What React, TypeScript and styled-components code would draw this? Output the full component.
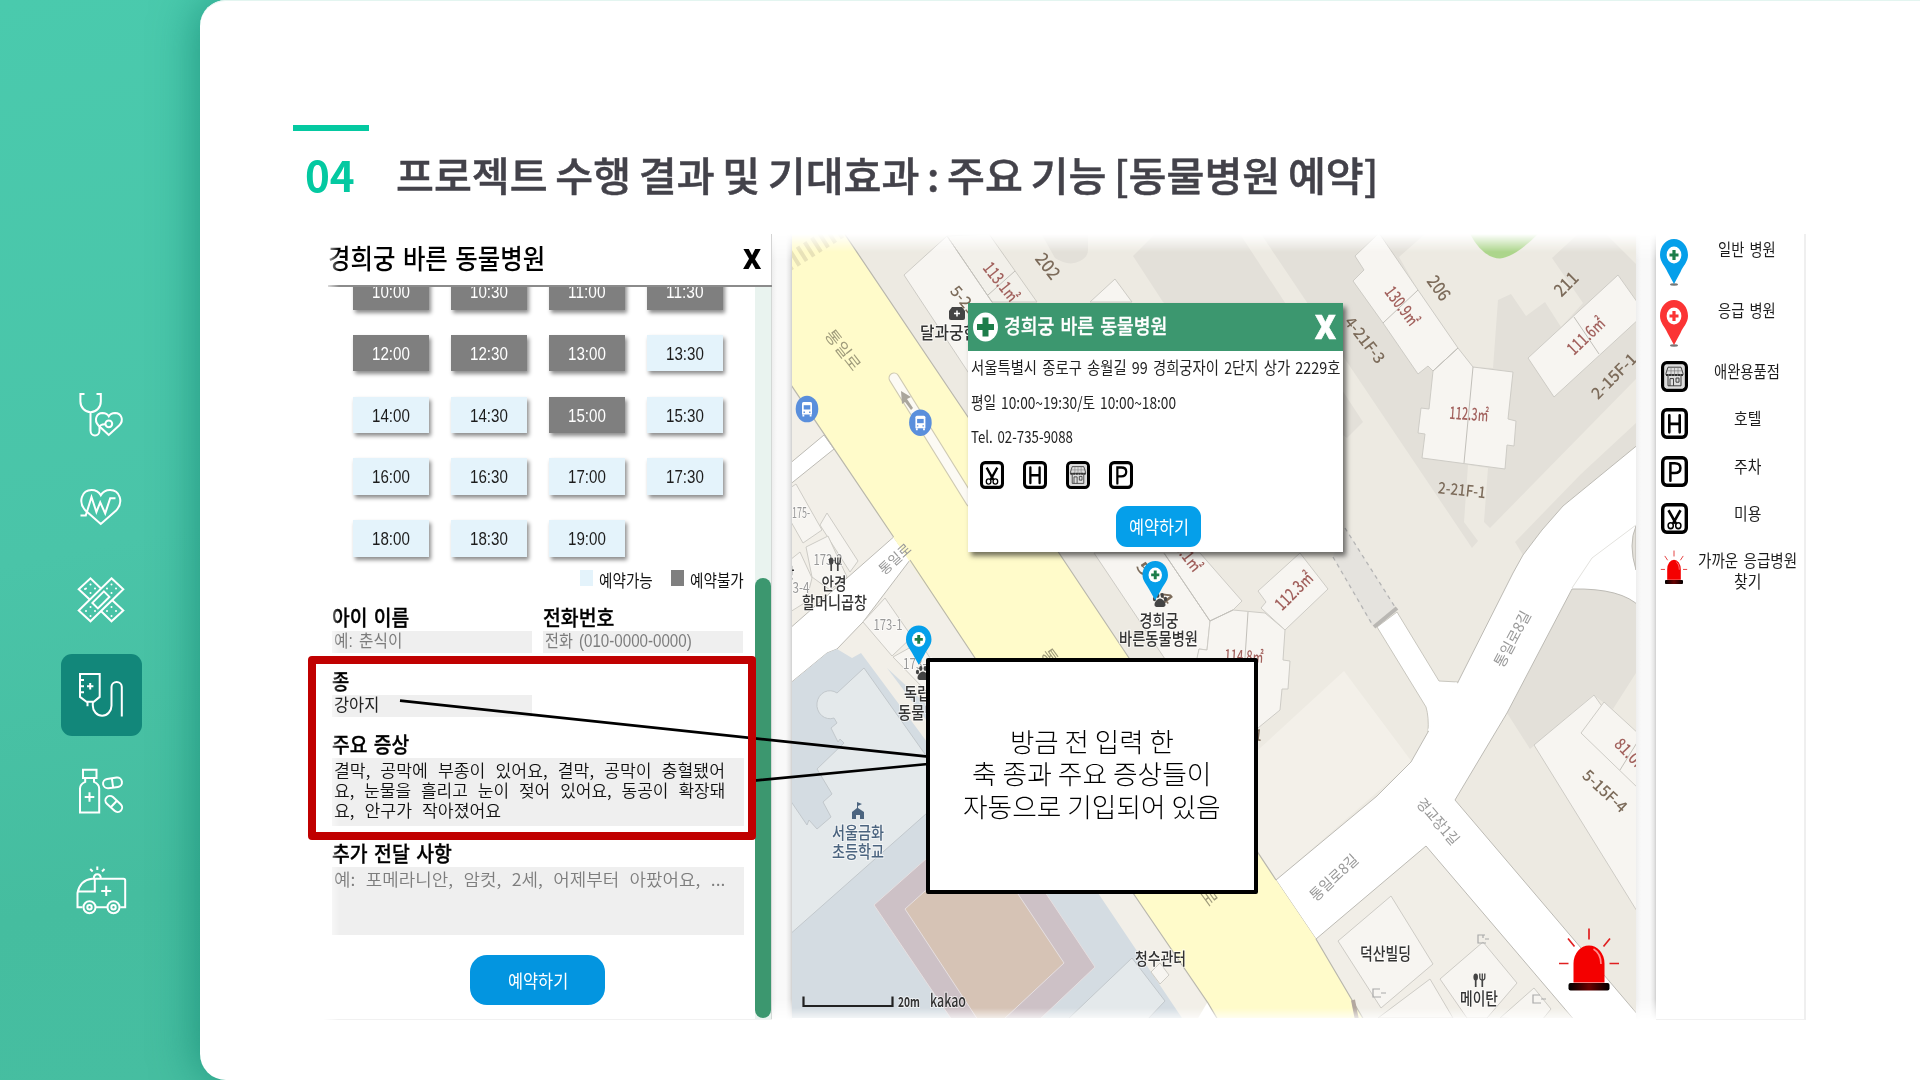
import React, { useLayoutEffect, useRef, useState } from "react";
import styled, { createGlobalStyle, css } from "styled-components";

const sans = `"Noto Sans CJK KR", "Noto Sans", sans-serif`;
const arial = `"Liberation Sans", "Noto Sans CJK KR", sans-serif`;
const green = "#3c976f";

const Global = createGlobalStyle`
  * { box-sizing: border-box; }
  body { margin: 0; background: #47bfa3; font-family: ${sans}; color: #111; }
`;

/* ---------- text squeezed to a known width ---------- */

const FitBox = styled.span`
  display: inline-block;
  flex: none;
  white-space: pre;
  text-align: left;
`;
const FitInner = styled.span`
  display: inline-block;
  transform-origin: 0 50%;
`;

function Fit({ w, children }: { w: number; children: string }) {
  const ref = useRef<HTMLSpanElement>(null);
  const [scale, setScale] = useState(1);
  useLayoutEffect(() => {
    if (ref.current) setScale(w / ref.current.offsetWidth);
  }, [w, children]);
  return (
    <FitBox style={{ width: w }}>
      <FitInner ref={ref} style={{ transform: `scaleX(${scale})` }}>
        {children}
      </FitInner>
    </FitBox>
  );
}

/* ---------- shell ---------- */

const Page = styled.div`
  width: 1920px;
  height: 1080px;
  display: flex;
  overflow: hidden;
  background: linear-gradient(168deg, #4acaad 0%, #4ac4a8 38%, #45bd9f 62%, #48c0a4 100%);
`;
const Sidebar = styled.nav`
  width: 200px;
  flex: none;
  display: flex;
  flex-direction: column;
  align-items: center;
  padding: 373px 0 0 3px;
`;
const NavItem = styled.a<{ $active?: boolean; $gap?: number }>`
  width: 81px;
  height: 82px;
  margin-bottom: ${(p) => p.$gap ?? 11}px;
  border-radius: 11px;
  display: flex;
  align-items: center;
  justify-content: center;
  background: ${(p) => (p.$active ? "#12877a" : "transparent")};
`;
const NavSvg = styled.svg`
  width: 48px;
  height: 48px;
  margin-right: 1.5px;
  overflow: visible;
  fill: none;
  stroke: #fff;
  stroke-width: 2;
`;
const Sheet = styled.main`
  position: relative;
  flex: 1;
  background: #fff;
  border-radius: 26px 0 0 26px;
  box-shadow: -4px 0 44px rgba(10, 125, 105, 0.6), inset 0 1px #e3f5f0;
  padding: 125px 0 0 93px;
`;
const Accent = styled.div`
  width: 76px;
  height: 6px;
  background: #04c9a1;
`;
const Heading = styled.header`
  display: flex;
  align-items: center;
  height: 62px;
  margin-top: 12px;
  padding-left: 12px;
  line-height: 62px;
`;
const Num = styled.div`
  width: 91px;
  height: 64px;
  color: #04c9a1;
  font: 700 43px/62px ${sans};
`;
const Title = styled.h1`
  margin: 0;
  color: #43424a;
  font: 500 40px/62px ${sans};
  word-spacing: -0.04em;
  -webkit-text-stroke: 0.5px #43424a;
`;
const Shot = styled.section`
  display: flex;
  height: 786px;
  margin: 29px 0 0 30px;
  word-spacing: 0.14em;
`;

/* ---------- booking ---------- */

const Booking = styled.section`
  width: 449px;
  height: 786px;
  display: flex;
  flex-direction: column;
  padding-left: 5px;
  border-bottom: 1px solid #f1f1f1;
  mask-image: linear-gradient(90deg, transparent 0, #000 16px);
`;
const BookingHead = styled.div`
  height: 53px;
  flex: none;
  display: flex;
  align-items: center;
  justify-content: space-between;
  padding: 0 11px 0 0;
  font-size: 27px;
  line-height: 49px;
  font-weight: 500;
  color: #000;
  border-bottom: 2px solid #8b8b8b;
  box-shadow: inset -1px 0 #d4d4d4;
`;
const HeadTitle = styled.div`
  height: 53px;
`;
const Close = styled.b<{ $light?: boolean }>`
  height: ${(p) => (p.$light ? 40 : 43)}px;
  font: 800 ${(p) => (p.$light ? 33 : 28)}px/40px "Open Sans", sans-serif;
  color: ${(p) => (p.$light ? "#fff" : "#000")};
  -webkit-text-stroke: ${(p) => (p.$light ? 0.6 : 0)}px currentColor;
`;
const BookingScroll = styled.div`
  flex: 1;
  display: flex;
  overflow: hidden;
`;
const BookingBody = styled.div`
  flex: 1;
  overflow: hidden;
  padding: 0 11px 0 4px;
`;
const Track = styled.div`
  width: 17px;
  background: #e9f3ef;
  border-right: 1px solid #d4d8d6;
  padding-top: 291px;
`;
const Thumb = styled.div`
  height: 440px;
  border-radius: 8px;
  background: ${green};
`;
const Slots = styled.div`
  display: grid;
  grid-template-columns: repeat(4, 76px);
  column-gap: 22px;
  row-gap: 25.3px;
  padding-left: 21px;
  margin-top: -14px;
`;
const Slot = styled.div<{ $taken: boolean }>`
  height: 36.5px;
  display: flex;
  justify-content: center;
  font: 17.5px/38px ${arial};
  box-shadow: 2px 3px 4px rgba(0, 0, 0, 0.45);
  background: ${(p) => (p.$taken ? "#7f7f7f" : "#e4f3fb")};
  color: ${(p) => (p.$taken ? "#fff" : "#1c1c1c")};
`;
const Key = styled.div`
  display: flex;
  justify-content: flex-end;
  align-items: center;
  height: 26px;
  margin: 10px 0 8px;
  font-size: 16.5px;
  line-height: 26px;
`;
const Swatch = styled.i<{ $taken?: boolean }>`
  width: 13px;
  height: 16px;
  margin: 0 6px 3px 18px;
  background: ${(p) => (p.$taken ? "#7f7f7f" : "#e4f3fb")};
`;
const Fields = styled.div`
  display: grid;
  grid-template-columns: 200px 200px;
  column-gap: 11px;
`;
const Field = styled.div<{ $h: number }>`
  height: ${(p) => p.$h}px;
`;
const Label = styled.div`
  height: 30px;
  font-size: 21px;
  line-height: 30px;
  font-weight: 500;
  color: #000;
  -webkit-text-stroke: 0.3px #000;
`;
const inputBase = css`
  background: #efefef;
  padding-left: 2px;
`;
const Input = styled.div<{ $hint?: boolean }>`
  ${inputBase}
  height: 22px;
  font: 17.5px/21px ${arial};
  color: ${(p) => (p.$hint ? "#7d7d7d" : "#222")};
`;
const Area = styled.div<{ $hint?: boolean }>`
  ${inputBase}
  height: 68px;
  padding-top: 2px;
  display: flex;
  flex-direction: column;
  font-size: 17px;
  line-height: 20px;
  font-weight: 350;
  word-spacing: 0.36em;
  color: ${(p) => (p.$hint ? "#7d7d7d" : "#111")};
`;
const Submit = styled.div`
  width: 135px;
  height: 50px;
  margin: 0 0 0 138px;
  border-radius: 17px;
  background: #0395e0;
  color: #fff;
  display: flex;
  justify-content: center;
  font-size: 18px;
  line-height: 50px;
`;

/* ---------- map ---------- */

const Gutter = styled.div`
  width: 20px;
  background: linear-gradient(90deg, #eee 0, #f9f9f9 5px, #f9f9f9 14px, #e6e6e6 18px, #cfcfcf 20px);
  mask-image: linear-gradient(transparent 0, #000 26px, #000 765px, transparent);
`;
const MapBox = styled.section`
  position: relative;
  width: 844px;
  height: 784px;
`;
const MapFade = styled.div`
  height: 784px;
  word-spacing: 0;
  mask-image: linear-gradient(transparent 0, #000 18px, #000 774px, rgba(0, 0, 0, 0.3));
`;
const Popup = styled.div`
  position: absolute;
  left: 176px;
  top: 69px;
  width: 375px;
  height: 249px;
  background: #fff;
  box-shadow: 3px 4px 5px rgba(0, 0, 0, 0.55);
`;
const PopupHead = styled.div`
  height: 48px;
  background: ${green};
  color: #fff;
  display: flex;
  align-items: center;
  padding: 0 7px 0 5px;
  font-size: 20.5px;
  line-height: 44px;
  font-weight: 500;
  -webkit-text-stroke: 0.3px #fff;
`;
const PopupTitle = styled.div`
  flex: 1;
  height: 48px;
  padding-left: 6px;
`;
const PopupLine = styled.div`
  height: 34.7px;
  padding-left: 3px;
  font-size: 16.5px;
  line-height: 32px;
  color: #222;
`;
const Services = styled.div`
  display: flex;
  gap: 19px;
  padding: 6px 0 0 12px;
`;
const Reserve = styled.div`
  width: 85px;
  height: 41px;
  margin: 17px 0 0 148px;
  border-radius: 11px;
  background: #059fea;
  color: #fff;
  display: flex;
  justify-content: center;
  font-size: 18.5px;
  line-height: 40px;
`;

/* ---------- legend ---------- */

const Legend = styled.aside`
  width: 150px;
  height: 786px;
  padding-top: 5px;
  border-right: 2px solid #efefef;
  border-bottom: 1px solid #f1f1f1;
`;
const LegendRow = styled.div<{ $h: number }>`
  height: ${(p) => p.$h}px;
  display: grid;
  grid-template-columns: 36px 1fr;
  justify-items: center;
`;
const LegendText = styled.div`
  display: flex;
  flex-direction: column;
  align-items: center;
  padding-right: 2px;
  font-size: 16.5px;
  line-height: 20.5px;
  color: #1c1c1c;
`;

/* ---------- annotations ---------- */

const RedFrame = styled.div`
  position: absolute;
  left: 108px;
  top: 656px;
  width: 448px;
  height: 184px;
  border: 8px solid #c00000;
  border-radius: 4px;
`;
const Leaders = styled.svg`
  position: absolute;
  left: 190px;
  top: 690px;
`;
const Callout = styled.div`
  position: absolute;
  left: 726px;
  top: 658px;
  width: 332px;
  height: 236px;
  border: 4px solid #000;
  border-radius: 2px;
  background: #fff;
  color: #000;
  display: flex;
  flex-direction: column;
  align-items: center;
  padding-top: 63px;
  font-size: 26px;
  line-height: 32.3px;
  font-weight: 200;
`;

/* ---------- icons ---------- */

const Badge = styled.svg`
  display: block;
  overflow: visible;
`;

function ServiceIcon({ kind, w, h }: { kind: string; w: number; h: number }) {
  return (
    <Badge width={w} height={h} viewBox="0 0 27 30" preserveAspectRatio="none" fill="none" stroke="#000">
      <rect x="1.7" y="1.7" width="23.6" height="26.6" rx="4" fill="#fff" strokeWidth="3.4" />
      {kind === "H" && <path d="M8.3 7v16.5M18.7 7v16.5M8.3 15.3h10.4" strokeWidth="2.6" strokeLinecap="round" />}
      {kind === "P" && <path d="M9.4 24V7h4.4c3.7 0 5.6 1.7 5.6 4.6 0 3.2-2.1 4.9-5.6 4.9H9.4" strokeWidth="2.5" strokeLinecap="round" />}
      {kind === "cut" && (
        <>
          <path d="M7.5 7l7.5 13M19.5 7l-7.5 13" strokeWidth="2.6" />
          <ellipse cx="9.7" cy="22" rx="2.600" ry="2.8" strokeWidth="1.5" />
          <ellipse cx="17.3" cy="22" rx="2.600" ry="2.8" strokeWidth="1.5" />
        </>
      )}
      {kind === "shop" && (
        <>
          <rect x="3.5" y="3.5" width="20" height="23" rx="2" fill="#ddd" stroke="none" />
          <path d="M7 6h13l2 6v1.5H5V12zM7 14v10h13V14M9 24v-7h3.5v7M15 16.5h3v4h-3z" stroke="#333" strokeWidth="0.9" />
          <path d="M5 9.5h17M10 6v7M13.5 6v7M17 6v7" stroke="#777" strokeWidth="0.6" />
          <path d="M5 13.6h17" stroke="#333" strokeWidth="2" strokeDasharray="2.4 0.6" />
        </>
      )}
    </Badge>
  );
}

function PinShape({ color, shadow }: { color: string; shadow?: boolean }) {
  return (
    <>
      {shadow && <ellipse cx="14" cy="45.5" rx="4" ry="1.2" fill="#777" />}
      <path d="M14 0C6 0 0 7 0 16c0 7 5 11 7.500 17L14 45l6.500-12C23 27 28 23 28 16 28 7 22 0 14 0z" fill={color} />
      <ellipse cx="14" cy="16" rx="7.4" ry="8.5" fill="#fff" />
      <path d="M14 11v10M9.500 16h9" stroke={color === "#059fea" ? "#1d7d4a" : color} strokeWidth="3.2" />
    </>
  );
}

function SirenShape() {
  return (
    <>
      <path d="M5 37V18a15.500 18 0 0 1 31 0v19z" fill="#f40000" />
      <path d="M25 3.500c5 3 7.500 8 7.500 15" stroke="#ff8d8d" strokeWidth="1.6" fill="none" />
      <rect x="0" y="37.5" width="41" height="7.5" rx="2" fill="url(#sirenBase)" />
      <path d="M20.500-17v11M-.5-7l6.500 8M41.500-7L35 1M-9.500 18H0M41 18h9.500" stroke="#e02020" strokeWidth="1.7" fill="none" />
      <defs>
        <linearGradient id="sirenBase">
          <stop offset="0" stopColor="#000" />
          <stop offset=".5" stopColor="#6b0000" />
          <stop offset="1" stopColor="#000" />
        </linearGradient>
      </defs>
    </>
  );
}

const dots = [
  [13.5, 8.5], [9, 12.5], [18, 12.5], [13.5, 17], [8, 13], [34.5, 8.5], [30, 12.5], [39, 12.5], [34.5, 17],
  [13.5, 31], [9, 35], [18, 35], [13.5, 40], [34.5, 31], [30, 35], [39, 35], [34.5, 40],
];

const navIcons: { gap?: number; active?: boolean; art: React.ReactNode }[] = [
  {
    art: (
      <>
        <path d="M7.500 4H3.400v7.500a10.200 10.700 0 0 0 20.400 0V4h-4.300M13.500 22v18.500a4.500 5 0 0 0 9 0V37q0-2.500 5.700-2.800" />
        <path d="M31.800 45L21.500 35.500C16.500 30 19.500 23.200 25.500 23c3 0 5 1 6.300 3.300C33.100 24 35.100 23 38.100 23c6 .2 9.500 7 4 12.500z" />
        <circle cx="31.8" cy="33.8" r="3.4" />
      </>
    ),
  },
  {
    art: (
      <>
        <path d="M23.800 41L8.500 27.500C.5 19 5 7 14.500 7c4 0 7.500 2 9.300 5.200C25.600 9 29.100 7 33.100 7 42.600 7 47.100 19 39.100 27.500z" />
        <path d="M3.500 32.400h5.300L14.500 14l4.900 15 3.800-9.600 5 11 5-15.200h5.300" />
      </>
    ),
  },
  {
    gap: 13,
    art: (
      <>
        <path d="M34.500 2.300L46.300 13.200 13.500 45.300 1.700 34.500z" />
        <path d="M24 12.500L13.500 2.300 1.700 13.200l11 10.300M35.300 24.200l11 10.300-11.800 10.800-10.600-10.300" />
        <path d="M26.900 15.400l5.500 5.500-11.500 11.500-5.500-5.500z" />
        {dots.map(([x, y], i) => (
          <circle key={i} cx={x} cy={y} r="1" fill="#fff" stroke="none" />
        ))}
      </>
    ),
  },
  {
    gap: 14,
    active: true,
    art: (
      <path d="M3 3h19.700v22.900l-5.900 4.800H9.500L3 25.900zM3 8.900h4M3 15.200h4M3 21.200h4M13.200 12v6.400M10 15.200h6.400M10.500 30.700v4.500M15.800 30.700v4a9.350 10 0 0 0 18.700 0V16a5.150 5 0 0 1 10.300 0v29.500" />
    ),
  },
  {
    gap: 17,
    art: (
      <>
        <path d="M6 2.800h13.500V11H6zM8.200 11v3.800Q3 17 3 21.500v24h19.200v-24q0-4.500-5.200-6.700V11M12.500 25.200v9.600M7.700 30h9.600" />
        <g transform="rotate(-8 35.500 15.900)">
          <rect x="26" y="11.2" width="19" height="9.4" rx="4.7" />
          <path d="M35.500 11.200v9.400" />
        </g>
        <g transform="rotate(43 36.800 37)">
          <rect x="27" y="32.5" width="19.5" height="9" rx="4.5" />
          <path d="M36.800 32.500v9" />
        </g>
      </>
    ),
  },
  {
    art: (
      <>
        <path d="M5.500 41.200H.5V27Q3 14 15 12.700h31.500q1.700 0 1.700 1.700v26.800h-5M19 41.200h11M17.800 12.700v12.900H1M29.200 19.800V30M24.200 24.900h10M16.800 12.700c0-6 7-6 7 0M20.300.5v3.500M13.200 3l2.500 2.500M27.500 3L25 5.500" />
        <circle cx="12.5" cy="41.2" r="6" />
        <circle cx="12.5" cy="41.2" r="2.2" />
        <circle cx="36.5" cy="41.2" r="6" />
        <circle cx="36.5" cy="41.2" r="2.2" />
      </>
    ),
  },
];

/* ---------- map drawing ---------- */

const brown = "#7c6b5a";
const red = "#a2615d";
const grey = "#999";
const ink = "#333";

type MapLabel = [text: string, x: number, y: number, w: number, size: number, color: string, rot?: number, weight?: number];

const mapLabels: MapLabel[] = [
  ["202", 1048, 266, 28, 18, brown, 52, 500],
  ["113.1㎡", 1001, 282, 45, 17, red, 51, 500],
  ["5-21", 964, 300, 32, 16, brown, 50, 500],
  ["달과궁한", 949, 333, 58, 17, ink, 0, 500],
  ["통일로", 843, 350, 47, 16, "#a09c7c", 52, 400],
  ["175-", 801, 513, 18, 15, grey],
  ["173-2", 828, 560, 29, 15, grey],
  ["안경", 834, 584, 25, 17, ink, 0, 500],
  ["할머니곱창", 834.5, 602.5, 65, 17, ink, 0, 500],
  ["창", 788, 574, 13, 17, ink, 0, 500],
  ["3-4", 801, 587.5, 17, 15, grey],
  ["통일로", 895, 559, 38, 14, grey, -42],
  ["206", 1439, 288, 26, 18, brown, 54, 500],
  ["130.9㎡", 1402, 306, 44, 17, red, 53, 500],
  ["4-21F-3", 1365, 340, 54, 16, brown, 52, 500],
  ["211", 1566, 284, 26, 18, brown, -45, 500],
  ["111.6㎡", 1586, 336, 45, 17, red, -44, 500],
  ["2-15F-1", 1614, 376, 57, 16, brown, -45, 500],
  ["112.3㎡", 1469, 414, 39, 17, red, 4, 500],
  ["2-21F-1", 1462, 490, 48, 16, brown, 6, 500],
  ["112.3㎡", 1294, 591, 46, 17, red, -45, 500],
  ["113.1㎡", 1184, 551, 47, 17, red, 52, 500],
  ["5-14", 1155, 583, 50, 16, brown, 52, 500],
  ["경희궁", 1159, 621, 39, 17, ink, 0, 500],
  ["바른동물병원", 1158.5, 639, 79, 17, ink, 0, 500],
  ["통일로", 1059, 669, 47, 16, "#a09c7c", 54],
  ["통일로", 1199, 883, 52, 16, "#a09c7c", 54],
  ["114.8㎡", 1244, 656, 39, 16, red, 3, 500],
  ["2-21F-1", 1240, 733, 44, 16, brown, 6, 500],
  ["173-1", 888, 625, 29, 15, grey],
  ["173-4", 918, 664, 30, 15, grey],
  ["독립문", 923.5, 694, 39, 17, ink, 0, 500],
  ["동물병원", 924.5, 712.5, 53, 17, ink, 0, 500],
  ["서울금화", 858, 832.5, 52, 17, "#4b647f", 0, 500],
  ["초등학교", 858, 852, 52, 17, "#4b647f", 0, 500],
  ["청수관터", 1160.5, 959, 51, 17, ink, 0, 500],
  ["20m", 909, 1002, 22, 14, ink, 0, 700],
  ["kakao", 948, 1001, 36, 17, ink, 0, 500],
  ["통일로8길", 1512.5, 639, 61, 15, grey, -62],
  ["경교장1길", 1438, 821.5, 56, 15, grey, 49],
  ["통일로8길", 1334, 877.5, 60, 15, grey, -43],
  ["81.0㎡", 1632, 756, 42, 16, red, 46, 500],
  ["5-15F-4", 1605, 791, 54, 16, brown, 43, 500],
  ["덕산빌딩", 1385.5, 954, 51, 17, ink, 0, 500],
  ["메이탄", 1479, 999, 38, 17, ink, 0, 500],
];

const buildings = [
  "904,275 947,236 992,302 1020,345 990,400 968,372",
  "1090,302 1115,279 1132,302",
  "1379,233 1418,290 1458,348 1433,371 1428,366 1418,374 1383,323 1353,281 1364,270 1355,256",
  "1458,348 1473,367 1513,372 1508,419 1516,421 1514,446 1507,445 1505,469 1422,458 1425,434 1418,433 1421,408 1429,409 1433,371",
  "1618,275 1640,306 1640,318 1554,397 1528,358",
  "1300,553 1328,589 1285,630 1261,608 1266,602 1258,591",
  "1094,553 1164,553 1210,621 1207,650 1199,649 1197,665 1169,665",
  "1164,553 1200,553 1242,601 1233,610 1210,621",
  "1210,621 1233,610 1265,613 1285,630 1283,660 1290,661 1288,689 1282,689 1280,710 1258,728 1200,728 1197,658 1199,649 1207,650",
  "790,488 796,484 822,530 803,543 790,520",
  "827,513 858,561 850,572 820,525",
  "806,547 828,536 847,577 830,590 812,577 810,567",
  "790,560 800,552 812,578 806,602 790,612",
  "885,598 912,637 892,656 863,622",
  "893,657 920,642 950,690 927,692",
  "1160,963 1169,975 1160,984 1151,972",
  "1391,896 1433,964 1381,1008 1338,941",
  "1378,1018 1430,979 1453,1018",
  "1483,942 1517,983 1487,1018 1467,1018 1440,979",
  "1500,1018 1534,988 1551,1009 1542,1020",
  "1594,695 1640,760 1640,916 1534,745",
  "1604,702 1640,735 1640,790 1581,733",
];

function Bus({ x, y }: { x: number; y: number }) {
  return (
    <g transform={`translate(${x} ${y})`}>
      <ellipse rx="11.3" ry="13.3" fill="#5a8fdc" />
      <path d="M-5-5.500q0-1.500 1.500-1.500h7q1.500 0 1.500 1.500V5.500H-5z" fill="#fff" />
      <path d="M-3.300-3.800h6.600v4.300h-6.600z" fill="#5a8fdc" />
      <path d="M-3.600 5.500v2M3.600 5.500v2" stroke="#fff" strokeWidth="1.8" />
      <path d="M-3.500 3.200h1.400M2.100 3.200h1.400" stroke="#5a8fdc" strokeWidth="1.4" />
    </g>
  );
}

function Paw({ x, y }: { x: number; y: number }) {
  return (
    <g transform={`translate(${x} ${y})`} fill="#444">
      <path d="M0-1.500c3 0 5.500 4 5.500 6.200 0 2.800-3 2.200-5.500 2.200s-5.500.6-5.500-2.200C-5.500 2.500-3-1.500 0-1.500z" />
      <ellipse cx="-5.5" cy="-1" rx="1.6" ry="2.3" />
      <ellipse cx="-2.2" cy="-4.5" rx="1.6" ry="2.4" />
      <ellipse cx="2.2" cy="-4.5" rx="1.6" ry="2.4" />
      <ellipse cx="5.5" cy="-1" rx="1.6" ry="2.3" />
    </g>
  );
}

function Cutlery({ x, y }: { x: number; y: number }) {
  return (
    <g transform={`translate(${x} ${y})`} fill="none" stroke="#444">
      <ellipse cx="-3.3" cy="-3" rx="2.3" ry="3.5" fill="#444" stroke="none" />
      <path d="M-3.300 0v7M3.300 0v7" strokeWidth="1.7" />
      <path d="M.8-6.500v4q0 2.500 2.500 2.500t2.500-2.500v-4M3.300-6.500V0" strokeWidth="1.3" />
    </g>
  );
}

function MapDrawing() {
  return (
    <svg width="844" height="784" viewBox="792 234 844 784" fontFamily={sans}>
      <path fill="#edeae2" d="M792 234h844v784H792z" />
      <g fill="#e3e0d9">
        <path d="M1042 235l13 23q14 9 25 3 8-4 8-11v-15z" />
        <path d="M1155 234l-22 22 30 46 184 136 16-16-123-188z" />
        <path d="M1261 234h164l-26 23 19 33 40 58 15 19 20 1 5-68 13-6 15 22 19-14 16 25 22-24-31-45 26-24h28l31 31v113l-147 150-6-6 4-54-20-3-4 57 14 19-6 7z" />
        <path d="M1515 542l66-68 55-51v24l-73 59-21 24-19 25z" />
        <path d="M1572 589q50-1 64 14v70l-23 36-20-14-63 54-23-36z" />
      </g>
      <path d="M1470 234q13 24 30 24.500 15-1.500 38-24.500z" fill="#acd58b" />
      <path d="M1344 671l68 91-136 118-18-27V750z" fill="#f3f0e9" />
      <path d="M1316 939l110-93 146 172h-209z" fill="#f1eee7" />
      <path d="M792 386l426 634H792z" fill="#f2efe8" />

      <g stroke="#bdbbb5" strokeWidth="1">
        <path fill="#fff" d="M1640 443l-77 63-21 24-19 25-10 18-55 109-30 50-17 30-34 34-101 84 40 59 110-93 150 176h68L1455 800l52-87 65-124q50-1 68 18z" />
        <path fill="#fff" d="M1397 612l42 69 19 1-30 50q1-15-2-25l-49-80z" stroke="#c9c7bf" />
        <path fill="#fff" d="M788 465l36-30 10 14-46 37zM893.600 537L788 630v55l39-32 10-4 26-27 47-62z" />
      </g>
      <path d="M1429 731l28-48" stroke="#fff" strokeWidth="3" />
      <path d="M1636 526q-8 18 0 44z" fill="#e3e0d9" stroke="#bdbbb5" />
      <path d="M1572 588l20-30 44-33" stroke="#e3e2de" fill="none" />
      <path d="M1345 528l50 79-23 19-39-69z" fill="#e5e3de" />
      <path d="M1345 528l50 79M1333 557l39 67" stroke="#b5b5b5" strokeDasharray="4 4" fill="none" strokeWidth="1.3" />
      <path d="M1374 627l23-19" stroke="#b9b7b3" strokeWidth="4" />

      <path d="M837 649l15 9 9-5 66 89 171 151 84 125H792V682l35-29z" fill="#d4dce2" />
      <path d="M887 668l40 37v16z" fill="#d4dce2" />
      <g fill="#e4e9eb" stroke="#c2c8cc">
        <path d="M864 668l63 89v56L788 936V797l19 28 2-5 8 9 14-12-8-15 9-8-15-25 27-26-4-4-2 3-7-14 6-5-3-5a13 14 0 1 1 3-25z" />
        <path d="M1132 958l33 43-18 19h-80z" />
      </g>
      <g stroke="#e6dfe0">
        <path d="M927 858l-53 47 78 115h87l56-53-60-90z" fill="#cdc1c6" />
        <path d="M925 891l-20 18 73 111h25l61-57-60-90z" fill="#d6c3b5" />
      </g>

      <path
        d="M788 380.500V230h54l126 187 91 136 70 105 147 222 40 59 36 61 12 20h-146l-10-17-75-110-158-235-82-121z"
        fill="#fffbca"
      />
      <path
        d="M842 230l126 187 91 136 70 105 147 222M1316 939l36 61 12 20M788 380.500L893.600 537M910 560l65 98 158 235 75 110 10 17"
        fill="none"
        stroke="#b9b7ad"
        strokeWidth="1.2"
      />
      <path d="M1207 1003l-10 17h20z" fill="#fff" />
      <path d="M786 264l60-38" stroke="#e8e2b8" strokeWidth="17" strokeDasharray="4 4.500" />
      <path d="M894 378l77 124" stroke="#cfcab2" strokeWidth="11" strokeLinecap="round" />
      <path d="M894 378l77 124" stroke="#fcfaf4" strokeWidth="9" strokeLinecap="round" />
      <path d="M901 391l1 13 3-2 6 8 2-2-6-9 4-2z" fill="#aaa69c" />

      <path d="M947 236l42-2 48 68h-45z" fill="#f2f0ea" stroke="#cdcbc4" />
      <g fill="#f7f5f1" stroke="#ceccc6">
        {buildings.map((points) => (
          <polygon key={points} points={points} />
        ))}
      </g>
      <path
        d="M947 236l45 66M1015 271l-27 24M1418 290l-35 33M1473 367l-9 96M1574 317l25 37M1248 612l-3 46M1620 770l18-29M1433 371l25-23M1164 553l46 68 23-11"
        stroke="#c2c0ba"
        fill="none"
      />
      <path d="M1353 1000l4 20" stroke="#b3a79f" strokeWidth="4" />
      <g fill="none" stroke="#aaa" strokeWidth="1.2">
        <path d="M1485 935h-7v8h8M1485 939h4M1380 989h-7v8h8M1381 993h5M1540 995h-7v8h8M1541 999h5M1483 935v3" />
      </g>

      <g>
        {mapLabels.map(([text, x, y, w, size, color, rot = 0, weight = 400], i) => (
          <text
            key={i}
            transform={`translate(${x} ${y}) rotate(${rot})`}
            textAnchor="middle"
            dy={size * 0.36}
            fontSize={size}
            fontWeight={weight}
            fill={color}
            textLength={w}
            lengthAdjust="spacingAndGlyphs"
            stroke="#fff"
            strokeOpacity=".6"
            strokeWidth={rot ? 0 : 2}
            paintOrder="stroke"
          >
            {text}
          </text>
        ))}
      </g>

      <Bus x={807} y={409} />
      <Bus x={920.4} y={422.7} />
      <path d="M952 307h10l3 4v7q0 2-2 2h-12q-2 0-2-2v-7z" fill="#444" />
      <path d="M957 310.500v6M954 313.500h6" stroke="#fff" strokeWidth="1.5" />
      <Cutlery x={834.5} y={564} />
      <Cutlery x={1479} y={980} />
      <Paw x={1160} y={600} />
      <Paw x={923} y={673} />
      <path d="M852 819v-7l5-4v-6l5 2-4 2v2l6 4v7h-4v-4h-4v4z" fill="#4b647f" />
      <g transform="translate(1142.500 561) scale(.91 .87)">
        <PinShape color="#059fea" />
      </g>
      <g transform="translate(906 625.500) scale(.91 .87)">
        <PinShape color="#059fea" />
      </g>
      <path d="M803.500 996.500v9.500h89v-9.500" fill="none" stroke="#222" strokeWidth="2.2" />
      <g transform="translate(1568.500 945.500)">
        <SirenShape />
      </g>
    </svg>
  );
}

/* ---------- data ---------- */

const times = [
  "10:00", "10:30", "11:00", "11:30", "12:00", "12:30", "13:00", "13:30", "14:00", "14:30",
  "15:00", "15:30", "16:00", "16:30", "17:00", "17:30", "18:00", "18:30", "19:00",
];
const taken = new Set(["10:00", "10:30", "11:00", "11:30", "12:00", "12:30", "13:00", "15:00"]);

const legend: { h: number; icon: string; text: [string, number][] }[] = [
  { h: 61, icon: "blue", text: [["일반 병원", 58]] },
  { h: 61, icon: "red", text: [["응급 병원", 58]] },
  { h: 47, icon: "shop", text: [["애완용품점", 66]] },
  { h: 48, icon: "H", text: [["호텔", 27]] },
  { h: 47, icon: "P", text: [["주차", 27]] },
  { h: 47, icon: "cut", text: [["미용", 27]] },
  { h: 50, icon: "siren", text: [["가까운 응급병원", 99], ["찾기", 27]] },
];

function LegendIcon({ kind }: { kind: string }) {
  if (kind === "blue" || kind === "red")
    return (
      <Badge width="28" height="47">
        <PinShape color={kind === "blue" ? "#059fea" : "#fb3434"} shadow />
      </Badge>
    );
  if (kind === "siren")
    return (
      <Badge width="18" height="34" viewBox="0 -18 41 63" preserveAspectRatio="none">
        <SirenShape />
      </Badge>
    );
  return <ServiceIcon kind={kind} w={27} h={31} />;
}

export default function App() {
  return (
    <Page>
      <Global />
      <Sidebar>
        {navIcons.map((n, i) => (
          <NavItem key={i} $active={n.active} $gap={n.gap}>
            <NavSvg viewBox="0 0 48 48">{n.art}</NavSvg>
          </NavItem>
        ))}
      </Sidebar>
      <Sheet>
        <Accent />
        <Heading>
          <Num>
            <Fit w={50}>04</Fit>
          </Num>
          <Title>
            <Fit w={982}>프로젝트 수행 결과 및 기대효과 : 주요 기능 [동물병원 예약]</Fit>
          </Title>
        </Heading>
        <Shot>
          <Booking>
            <BookingHead>
              <HeadTitle>
                <Fit w={217}>경희궁 바른 동물병원</Fit>
              </HeadTitle>
              <Close>
                <Fit w={18}>X</Fit>
              </Close>
            </BookingHead>
            <BookingScroll>
              <BookingBody>
                <Slots>
                  {times.map((t) => (
                    <Slot key={t} $taken={taken.has(t)}>
                      <Fit w={38}>{t}</Fit>
                    </Slot>
                  ))}
                </Slots>
                <Key>
                  <Swatch />
                  <Fit w={54}>예약가능</Fit>
                  <Swatch $taken />
                  <Fit w={54}>예약불가</Fit>
                </Key>
                <Fields>
                  <Field $h={64.5}>
                    <Label>
                      <Fit w={77}>아이 이름</Fit>
                    </Label>
                    <Input $hint>
                      <Fit w={68}>예: 춘식이</Fit>
                    </Input>
                  </Field>
                  <Field $h={64.5}>
                    <Label>
                      <Fit w={71}>전화번호</Fit>
                    </Label>
                    <Input $hint>
                      <Fit w={147}>전화 (010-0000-0000)</Fit>
                    </Input>
                  </Field>
                  <Field $h={63}>
                    <Label>
                      <Fit w={17}>종</Fit>
                    </Label>
                    <Input>
                      <Fit w={45}>강아지</Fit>
                    </Input>
                  </Field>
                </Fields>
                <Field $h={109}>
                  <Label>
                    <Fit w={77}>주요 증상</Fit>
                  </Label>
                  <Area>
                    <Fit w={391}>결막, 공막에 부종이 있어요, 결막, 공막이 충혈됐어</Fit>
                    <Fit w={391}>요, 눈물을 흘리고 눈이 젖어 있어요, 동공이 확장돼</Fit>
                    <Fit w={167}>요, 안구가 작아졌어요</Fit>
                  </Area>
                </Field>
                <Field $h={118}>
                  <Label>
                    <Fit w={120}>추가 전달 사항</Fit>
                  </Label>
                  <Area $hint>
                    <Fit w={391}>예: 포메라니안, 암컷, 2세, 어제부터 아팠어요, ...</Fit>
                  </Area>
                </Field>
                <Submit>
                  <Fit w={60}>예약하기</Fit>
                </Submit>
              </BookingBody>
              <Track>
                <Thumb />
              </Track>
            </BookingScroll>
          </Booking>
          <Gutter />
          <MapBox>
            <MapFade>
              <MapDrawing />
            </MapFade>
            <Popup>
              <PopupHead>
                <Badge width="25" height="30" viewBox="0 0 25 30">
                  <ellipse cx="12.5" cy="15" rx="12.5" ry="14.5" fill="#fff" />
                  <path d="M12.500 5.500v19M4 15h17" stroke="#1d7d4a" strokeWidth="6" />
                </Badge>
                <PopupTitle>
                  <Fit w={163}>경희궁 바른 동물병원</Fit>
                </PopupTitle>
                <Close $light>
                  <Fit w={21}>X</Fit>
                </Close>
              </PopupHead>
              <PopupLine>
                <Fit w={369}>서울특별시 종로구 송월길 99 경희궁자이 2단지 상가 2229호</Fit>
              </PopupLine>
              <PopupLine>
                <Fit w={205}>평일 10:00~19:30/토 10:00~18:00</Fit>
              </PopupLine>
              <PopupLine>
                <Fit w={102}>Tel. 02-735-9088</Fit>
              </PopupLine>
              <Services>
                {["cut", "H", "shop", "P"].map((k) => (
                  <ServiceIcon key={k} kind={k} w={24} h={28} />
                ))}
              </Services>
              <Reserve>
                <Fit w={60}>예약하기</Fit>
              </Reserve>
            </Popup>
          </MapBox>
          <Gutter />
          <Legend>
            {legend.map((row) => (
              <LegendRow key={row.icon} $h={row.h}>
                <LegendIcon kind={row.icon} />
                <LegendText>
                  {row.text.map(([t, w]) => (
                    <Fit key={t} w={w}>
                      {t}
                    </Fit>
                  ))}
                </LegendText>
              </LegendRow>
            ))}
          </Legend>
        </Shot>
        <Leaders width="540" height="100" viewBox="390 690 540 100">
          <path d="M400 700.700L928 756.700M752 780.800L928 764" stroke="#000" strokeWidth="2.7" />
        </Leaders>
        <RedFrame />
        <Callout>
          <Fit w={164}>방금 전 입력 한</Fit>
          <Fit w={240}>축 종과 주요 증상들이</Fit>
          <Fit w={258}>자동으로 기입되어 있음</Fit>
        </Callout>
      </Sheet>
    </Page>
  );
}
